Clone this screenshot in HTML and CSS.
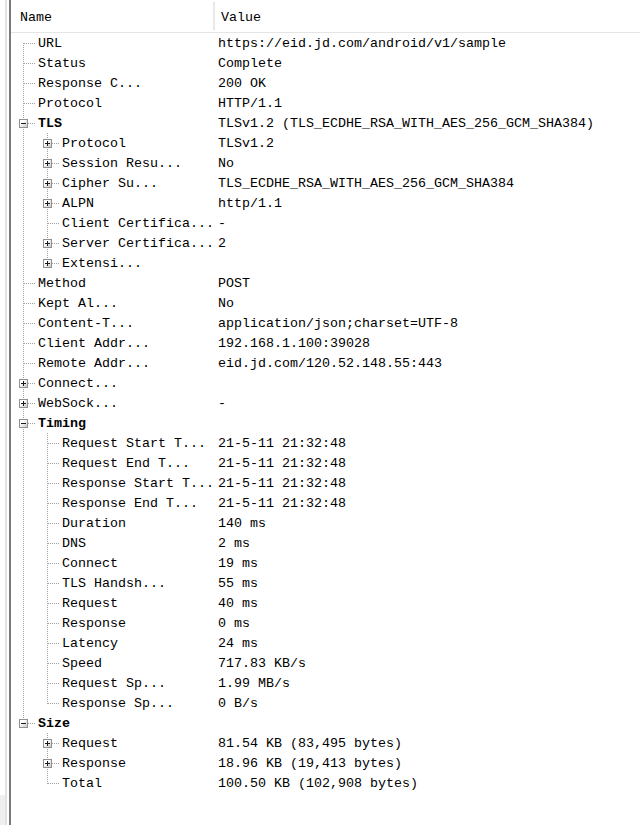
FILE: index.html
```html
<!DOCTYPE html>
<html>
<head>
<meta charset="utf-8">
<link rel="stylesheet" href="styles.css">
</head>
<body>
<div class="app">
  <div class="gutter">
    <div class="grip"><div class="grip-fill"></div></div>
    <div class="gline-light"></div>
    <div class="gspace"></div>
    <div class="gline-dark"></div>
  </div>
  <div class="panel">
    <div class="header">
      <div class="hname">Name</div>
      <div class="hsep"></div>
      <div class="hval">Value</div>
    </div>
    <div class="rows">
      <div class="row"><div class="name"><span class="t first"></span><span class="label">URL</span></div><div class="val">https://eid.jd.com/android/v1/sample</div></div>
      <div class="row"><div class="name"><span class="t tee"></span><span class="label">Status</span></div><div class="val">Complete</div></div>
      <div class="row"><div class="name"><span class="t tee"></span><span class="label">Response C...</span></div><div class="val">200 OK</div></div>
      <div class="row"><div class="name"><span class="t tee"></span><span class="label">Protocol</span></div><div class="val">HTTP/1.1</div></div>
      <div class="row"><div class="name"><span class="t tee"><span class="box minus"></span></span><span class="label bold">TLS</span></div><div class="val">TLSv1.2 (TLS_ECDHE_RSA_WITH_AES_256_GCM_SHA384)</div></div>
      <div class="row"><div class="name"><span class="t pipe"></span><span class="t tee"><span class="box plus"></span></span><span class="label">Protocol</span></div><div class="val">TLSv1.2</div></div>
      <div class="row"><div class="name"><span class="t pipe"></span><span class="t tee"><span class="box plus"></span></span><span class="label">Session Resu...</span></div><div class="val">No</div></div>
      <div class="row"><div class="name"><span class="t pipe"></span><span class="t tee"><span class="box plus"></span></span><span class="label">Cipher Su...</span></div><div class="val">TLS_ECDHE_RSA_WITH_AES_256_GCM_SHA384</div></div>
      <div class="row"><div class="name"><span class="t pipe"></span><span class="t tee"><span class="box plus"></span></span><span class="label">ALPN</span></div><div class="val">http/1.1</div></div>
      <div class="row"><div class="name"><span class="t pipe"></span><span class="t tee"></span><span class="label">Client Certifica...</span></div><div class="val">-</div></div>
      <div class="row"><div class="name"><span class="t pipe"></span><span class="t tee"><span class="box plus"></span></span><span class="label">Server Certifica...</span></div><div class="val">2</div></div>
      <div class="row"><div class="name"><span class="t pipe"></span><span class="t last"><span class="box plus"></span></span><span class="label">Extensi...</span></div><div class="val"></div></div>
      <div class="row"><div class="name"><span class="t tee"></span><span class="label">Method</span></div><div class="val">POST</div></div>
      <div class="row"><div class="name"><span class="t tee"></span><span class="label">Kept Al...</span></div><div class="val">No</div></div>
      <div class="row"><div class="name"><span class="t tee"></span><span class="label">Content-T...</span></div><div class="val">application/json;charset=UTF-8</div></div>
      <div class="row"><div class="name"><span class="t tee"></span><span class="label">Client Addr...</span></div><div class="val">192.168.1.100:39028</div></div>
      <div class="row"><div class="name"><span class="t tee"></span><span class="label">Remote Addr...</span></div><div class="val">eid.jd.com/120.52.148.55:443</div></div>
      <div class="row"><div class="name"><span class="t tee"><span class="box plus"></span></span><span class="label">Connect...</span></div><div class="val"></div></div>
      <div class="row"><div class="name"><span class="t tee"><span class="box plus"></span></span><span class="label">WebSock...</span></div><div class="val">-</div></div>
      <div class="row"><div class="name"><span class="t tee"><span class="box minus"></span></span><span class="label bold">Timing</span></div><div class="val"></div></div>
      <div class="row"><div class="name"><span class="t pipe"></span><span class="t tee"></span><span class="label">Request Start T...</span></div><div class="val">21-5-11 21:32:48</div></div>
      <div class="row"><div class="name"><span class="t pipe"></span><span class="t tee"></span><span class="label">Request End T...</span></div><div class="val">21-5-11 21:32:48</div></div>
      <div class="row"><div class="name"><span class="t pipe"></span><span class="t tee"></span><span class="label">Response Start T...</span></div><div class="val">21-5-11 21:32:48</div></div>
      <div class="row"><div class="name"><span class="t pipe"></span><span class="t tee"></span><span class="label">Response End T...</span></div><div class="val">21-5-11 21:32:48</div></div>
      <div class="row"><div class="name"><span class="t pipe"></span><span class="t tee"></span><span class="label">Duration</span></div><div class="val">140 ms</div></div>
      <div class="row"><div class="name"><span class="t pipe"></span><span class="t tee"></span><span class="label">DNS</span></div><div class="val">2 ms</div></div>
      <div class="row"><div class="name"><span class="t pipe"></span><span class="t tee"></span><span class="label">Connect</span></div><div class="val">19 ms</div></div>
      <div class="row"><div class="name"><span class="t pipe"></span><span class="t tee"></span><span class="label">TLS Handsh...</span></div><div class="val">55 ms</div></div>
      <div class="row"><div class="name"><span class="t pipe"></span><span class="t tee"></span><span class="label">Request</span></div><div class="val">40 ms</div></div>
      <div class="row"><div class="name"><span class="t pipe"></span><span class="t tee"></span><span class="label">Response</span></div><div class="val">0 ms</div></div>
      <div class="row"><div class="name"><span class="t pipe"></span><span class="t tee"></span><span class="label">Latency</span></div><div class="val">24 ms</div></div>
      <div class="row"><div class="name"><span class="t pipe"></span><span class="t tee"></span><span class="label">Speed</span></div><div class="val">717.83 KB/s</div></div>
      <div class="row"><div class="name"><span class="t pipe"></span><span class="t tee"></span><span class="label">Request Sp...</span></div><div class="val">1.99 MB/s</div></div>
      <div class="row"><div class="name"><span class="t pipe"></span><span class="t last"></span><span class="label">Response Sp...</span></div><div class="val">0 B/s</div></div>
      <div class="row"><div class="name"><span class="t last"><span class="box minus"></span></span><span class="label bold">Size</span></div><div class="val"></div></div>
      <div class="row"><div class="name"><span class="t blank"></span><span class="t tee"><span class="box plus"></span></span><span class="label">Request</span></div><div class="val">81.54 KB (83,495 bytes)</div></div>
      <div class="row"><div class="name"><span class="t blank"></span><span class="t tee"><span class="box plus"></span></span><span class="label">Response</span></div><div class="val">18.96 KB (19,413 bytes)</div></div>
      <div class="row"><div class="name"><span class="t blank"></span><span class="t last"></span><span class="label">Total</span></div><div class="val">100.50 KB (102,908 bytes)</div></div>
    </div>
  </div>
</div>
</body>
</html>
```

FILE: styles.css
```css
html, body {
  margin: 0;
  padding: 0;
  background: #ffffff;
}

body {
  font-family: "Liberation Mono", "Noto Sans CJK SC", monospace;
  font-size: 13.33px;
  color: #000000;
}

.app {
  display: flex;
  width: 640px;
  height: 825px;
  overflow: hidden;
}

.gutter {
  display: flex;
  flex: 0 0 11px;
  height: 825px;
}

.grip {
  flex: 0 0 5px;
  display: flex;
  flex-direction: column;
  justify-content: flex-end;
}

.grip-fill {
  height: 30px;
  background: #efefef;
}

.gline-light {
  flex: 0 0 2px;
  background: #e2e2e2;
}

.gspace {
  flex: 0 0 2px;
  background: #ffffff;
}

.gline-dark {
  flex: 0 0 2px;
  background: #7a7a7a;
}

.panel {
  flex: 1 1 auto;
  display: flex;
  flex-direction: column;
}

.header {
  display: flex;
  align-items: center;
  height: 32px;
  border-bottom: 1px solid #e5e5e5;
}

.hname {
  width: 202px;
  padding-left: 9px;
  box-sizing: border-box;
  line-height: 20px;
  padding-top: 4px;
}

.hsep {
  width: 2px;
  height: 28px;
  background: #e8e8e8;
}

.hval {
  padding-left: 6px;
  line-height: 20px;
  padding-top: 4px;
}

.rows {
  display: flex;
  flex-direction: column;
}

.row {
  display: flex;
  height: 20px;
  line-height: 20px;
  white-space: pre;
}

.name {
  display: flex;
  width: 202px;
  flex: 0 0 202px;
  overflow: hidden;
}

.val {
  padding-left: 5px;
  padding-top: 1px;
  height: 19px;
}

.label {
  padding-left: 3px;
  padding-top: 1px;
  height: 19px;
}

.bold {
  font-weight: bold;
}

.t {
  flex: 0 0 24px;
  width: 24px;
  height: 20px;
  display: flex;
  align-items: center;
  justify-content: flex-start;
  background-repeat: no-repeat;
}

.pipe {
  background-image: repeating-linear-gradient(to bottom, #a0a0a0 0 1px, transparent 1px 2px);
  background-size: 1px 20px;
  background-position: 12px 0;
}

.tee {
  background-image:
    repeating-linear-gradient(to bottom, #a0a0a0 0 1px, transparent 1px 2px),
    repeating-linear-gradient(to right, #a0a0a0 0 1px, transparent 1px 2px);
  background-size: 1px 20px, 12px 1px;
  background-position: 12px 0, 13px 10px;
}

.first {
  background-image:
    repeating-linear-gradient(to bottom, #a0a0a0 0 1px, transparent 1px 2px),
    repeating-linear-gradient(to right, #a0a0a0 0 1px, transparent 1px 2px);
  background-size: 1px 10px, 12px 1px;
  background-position: 12px 10px, 13px 10px;
}

.last {
  background-image:
    repeating-linear-gradient(to bottom, #a0a0a0 0 1px, transparent 1px 2px),
    repeating-linear-gradient(to right, #a0a0a0 0 1px, transparent 1px 2px);
  background-size: 1px 11px, 12px 1px;
  background-position: 12px 0, 13px 10px;
}

.blank {
  background: none;
}

.box {
  width: 7px;
  height: 7px;
  margin-left: 8px;
  margin-top: 1px;
  border: 1px solid #919191;
  background-color: #ffffff;
  background-repeat: no-repeat;
}

.minus {
  background-image:
    linear-gradient(#1a1a1a, #1a1a1a),
    linear-gradient(135deg, #ffffff 30%, #c8c8c8 100%);
  background-size: 5px 1px, 100% 100%;
  background-position: 1px 3px, 0 0;
}

.plus {
  background-image:
    linear-gradient(#1a1a1a, #1a1a1a),
    linear-gradient(#1a1a1a, #1a1a1a),
    linear-gradient(135deg, #ffffff 30%, #c8c8c8 100%);
  background-size: 5px 1px, 1px 5px, 100% 100%;
  background-position: 1px 3px, 3px 1px, 0 0;
}
```
